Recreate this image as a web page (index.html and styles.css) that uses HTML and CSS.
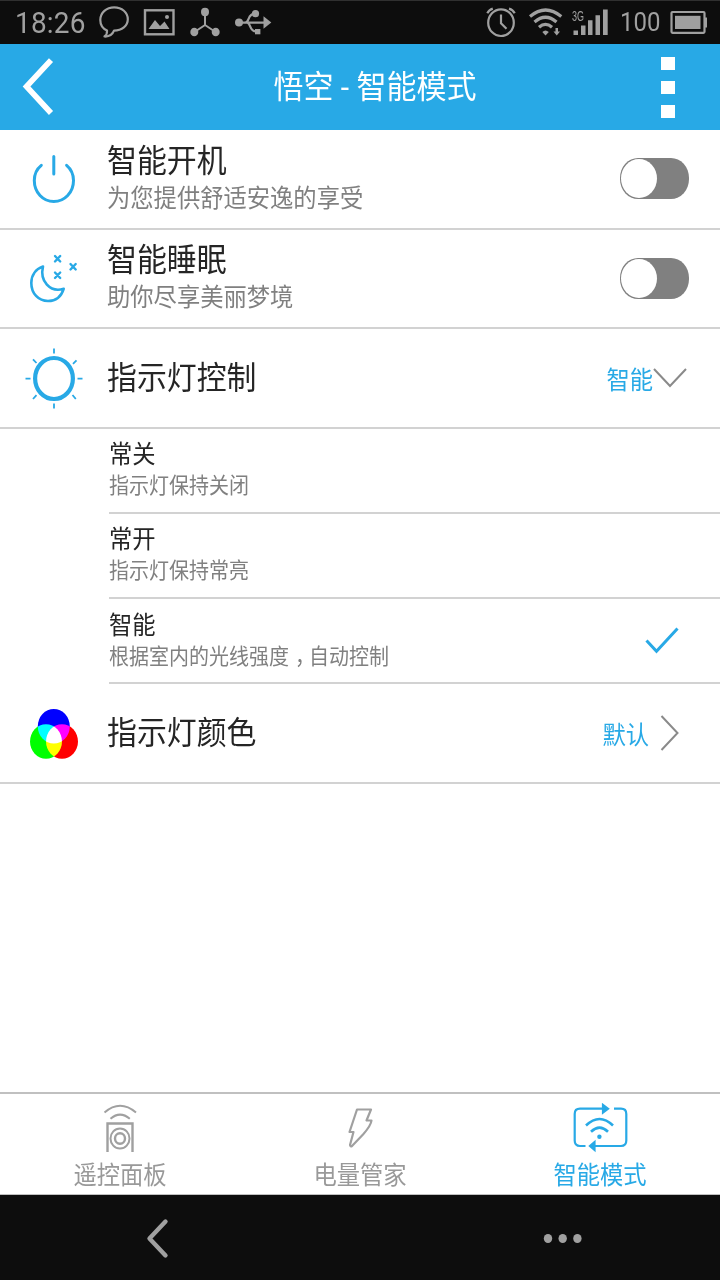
FILE: index.html
```
<!DOCTYPE html>
<html lang="zh-CN">
<head>
    <meta charset="UTF-8">
    <meta name="viewport" content="width=device-width, initial-scale=1.0">
    <title>悟空 - 智能模式</title>
    <link rel="stylesheet" href="styles.css">
</head>
<body>
    <div class="status-bar">
        <span class="status-time tall">18:26</span>
        <svg class="icon-bubble" width="32" height="44" viewBox="0 0 32 44" fill="none" stroke="#a0a0a0" stroke-width="2.2" stroke-linejoin="round">
            <path d="M9 30.500C4.500 28.500 2.300 24.500 2.300 20C2.300 12.500 8.500 7.300 16.200 7.300S29.800 12.500 29.800 19.200S24 30.700 16 30.700C14.500 34.500 11 36.800 6.500 36.500C8.500 35 9.300 33 9 30.500Z"/>
        </svg>
        <svg class="icon-picture" width="32" height="44" viewBox="0 0 32 44">
            <rect x="2" y="10.300" width="28.500" height="24" fill="none" stroke="#a0a0a0" stroke-width="2.400"/>
            <path d="M5.500 29L12 20L17 26L21.500 21.500L26.500 29Z" fill="#a0a0a0"/>
            <circle cx="24" cy="17" r="2" fill="#a0a0a0"/>
        </svg>
        <svg class="icon-node" width="32" height="44" viewBox="0 0 32 44" fill="#a0a0a0">
            <path d="M16 12V25L5.500 32M16 25L26.500 32" fill="none" stroke="#a0a0a0" stroke-width="2"/>
            <ellipse cx="16" cy="12" rx="4" ry="4.200"/>
            <ellipse cx="5.300" cy="32" rx="4" ry="4.300"/>
            <ellipse cx="26.700" cy="32" rx="4" ry="4.300"/>
        </svg>
        <svg class="icon-usb" width="40" height="44" viewBox="0 0 40 44" fill="#a0a0a0">
            <path d="M5 22.600H30M11 22.600C16 22.600 13 13.700 21 13.700M13 22.600C17 22.600 15 31.500 22 31.500H24" fill="none" stroke="#a0a0a0" stroke-width="2.200"/>
            <circle cx="5" cy="22.600" r="4"/>
            <circle cx="21.500" cy="13.700" r="3.600"/>
            <rect x="21" y="29" width="5.400" height="5.300"/>
            <path d="M29.500 16.300L37.300 22.600L29.500 28.800Z"/>
        </svg>
        <span class="spacer"></span>
        <svg class="icon-alarm" width="32" height="44" viewBox="0 0 32 44" fill="none" stroke="#a0a0a0" stroke-width="2.200">
            <ellipse cx="16" cy="22.700" rx="12.800" ry="13.300"/>
            <path d="M16 14.500V23.300L21.500 28.800M2.300 13.300Q4 9.800 7.800 8.600M24 8.600Q28 9.800 29.700 13.300"/>
        </svg>
        <svg class="icon-wifi" width="36" height="44" viewBox="0 0 36 44">
            <path d="M2 16.500Q17.500 3.500 33.300 16.500M6.500 22Q17.500 12.500 28.500 22M11 27.300Q17.500 21.500 24 27.300" fill="none" stroke="#a0a0a0" stroke-width="3.200"/>
            <path d="M14.300 32Q17.500 29 20.800 32L17.500 35.500Z" fill="#a0a0a0"/>
            <path d="M27.500 28H30V31.500H32L28.750 35.500L25.500 31.500H27.500Z" fill="#a0a0a0"/>
        </svg>
        <svg class="icon-signal" width="38" height="44" viewBox="0 0 38 44" fill="#a0a0a0">
            <text class="net-type" x="1" y="21" textLength="12" lengthAdjust="spacingAndGlyphs">3G</text>
            <path d="M2.500 30.500H7V35H2.500ZM10 25.500H14.500V35H10ZM17 20.300H21.500V35H17ZM24.500 15.300H29V35H24.500ZM32 9.500H36.700V35H32Z"/>
        </svg>
        <span class="status-battery tall">100</span>
        <svg class="icon-battery" width="38" height="44" viewBox="0 0 38 44" fill="#a0a0a0">
            <rect x="1.500" y="12" width="33" height="20.800" rx="1" fill="none" stroke="#a0a0a0" stroke-width="2.200"/>
            <rect x="5" y="15.800" width="25.500" height="13.200"/>
            <path d="M34.500 17.500H37V27.500H34.500Z"/>
        </svg>
    </div>

    <header class="title-bar">
        <svg width="60" height="86" viewBox="0 0 60 86" fill="none" stroke="#fff" stroke-width="5.600">
            <path d="M51 16.200L26.500 42.500L51 69"/>
        </svg>
        <h1 class="page-title"><span class="tall">悟空 - 智能模式</span></h1>
        <div class="menu-dots"><i></i><i></i><i></i></div>
    </header>

    <main class="settings">
        <section class="row">
            <svg class="row-icon" width="107" height="98" viewBox="0 0 107 98" fill="none" stroke="#28a9e6" stroke-width="3" stroke-linecap="round">
                <path d="M53.800 26.500V44M41.300 35.300C36.700 39 34.300 44.500 34.300 50.500C34.300 62.500 43 71.500 53.800 71.500S73.500 62.500 73.500 50.500C73.500 44.500 71 39 66.600 35.300"/>
            </svg>
            <div class="row-text">
                <h2 class="tall">智能开机</h2>
                <p class="tall">为您提供舒适安逸的享受</p>
            </div>
            <div class="switch"></div>
        </section>

        <section class="row">
            <svg class="row-icon" width="107" height="98" viewBox="0 0 107 98" fill="none" stroke="#28a9e6" stroke-width="2.600" stroke-linejoin="round" stroke-linecap="round">
                <path d="M43 37.500C35.500 40 31.300 46.500 31.300 54C31.300 64.500 38.500 72 48 72C55.500 72 61.300 67.500 63.700 59.800C50 64 39.500 52 43 37.500Z"/>
                <path d="M55 27L60.200 32.500M60.200 27L55 32.500M70.500 35L75.700 40.500M75.700 35L70.500 40.500M55 43.500L60.200 49M60.200 43.500L55 49" stroke-width="2.400"/>
            </svg>
            <div class="row-text">
                <h2 class="tall">智能睡眠</h2>
                <p class="tall">助你尽享美丽梦境</p>
            </div>
            <div class="switch"></div>
        </section>

        <section class="row">
            <svg class="row-icon" width="107" height="98" viewBox="0 0 107 98" fill="none" stroke="#28a9e6">
                <ellipse cx="54" cy="49.500" rx="18.900" ry="20.500" stroke-width="4.200"/>
                <path d="M54 19.500V24.500M54 74.500V79.500M25.500 49.700H30.500M77.500 49.700H82.500M33 30.300L36.500 34M76.500 31.300L73 34.800M33 70L36.500 66.200M75.800 70L72.500 66" stroke-width="1.800"/>
            </svg>
            <div class="row-text">
                <h2 class="tall">指示灯控制</h2>
            </div>
            <span class="row-value tall">智能</span>
            <svg class="arrow-down" width="34" height="20" viewBox="0 0 34 20" fill="none" stroke="#8a8a8a" stroke-width="2">
                <path d="M1 1L17 18L33 1"/>
            </svg>
        </section>

        <ul class="options">
            <li class="option">
                <div>
                    <h3 class="tall">常关</h3>
                    <p class="tall">指示灯保持关闭</p>
                </div>
            </li>
            <li class="option">
                <div>
                    <h3 class="tall">常开</h3>
                    <p class="tall">指示灯保持常亮</p>
                </div>
            </li>
            <li class="option">
                <div>
                    <h3 class="tall">智能</h3>
                    <p class="tall">根据室内的光线强度<span class="comma">，</span>自动控制</p>
                </div>
                <svg class="check" width="34" height="28" viewBox="0 0 34 28" fill="none" stroke="#28a9e6" stroke-width="3">
                    <path d="M1.500 13.500L11.500 24.300L32.500 1.500"/>
                </svg>
            </li>
        </ul>

        <section class="row">
            <svg class="row-icon" width="107" height="98" viewBox="0 0 107 98">
                <g class="rgb">
                    <ellipse cx="53.800" cy="42.300" rx="16" ry="17.300" fill="#00f"/>
                    <ellipse cx="46" cy="57.500" rx="16" ry="17.300" fill="#0f0"/>
                    <ellipse cx="62" cy="57.500" rx="16" ry="17.300" fill="#f00"/>
                </g>
            </svg>
            <div class="row-text">
                <h2 class="tall">指示灯颜色</h2>
            </div>
            <span class="row-value tall">默认</span>
            <svg class="arrow-right" width="20" height="36" viewBox="0 0 20 36" fill="none" stroke="#8a8a8a" stroke-width="2">
                <path d="M1.500 1L17.500 18L1.500 35"/>
            </svg>
        </section>
    </main>

    <nav class="tabs">
        <a class="tab">
            <svg width="60" height="60" viewBox="0 0 60 60" fill="none" stroke="#a0a0a0" stroke-width="2">
                <path d="M14.500 18.500Q30 5 46 18.500M20.500 24.700Q30 16.500 39.800 24.700"/>
                <path d="M17.500 58V29.500H42.500V58" stroke-width="2.400"/>
                <ellipse cx="30" cy="44.500" rx="9.500" ry="10"/>
                <ellipse cx="30" cy="44.500" rx="5" ry="5.300" stroke-width="2.400"/>
            </svg>
            <span class="tall">遥控面板</span>
        </a>
        <a class="tab">
            <svg width="60" height="60" viewBox="0 0 60 60" fill="none" stroke="#a0a0a0" stroke-width="2.200" stroke-linejoin="round">
                <path d="M27 15.500H41L36.500 26.500H41.500Q41 31.500 33 40.500L22 52Q20.500 53 20 51L23.500 38H19.500Z"/>
            </svg>
            <span class="tall">电量管家</span>
        </a>
        <a class="tab active">
            <svg width="60" height="60" viewBox="0 0 60 60" fill="none" stroke="#28a9e6" stroke-width="2.200">
                <path d="M35 14.700H10Q4.700 14.700 4.700 20V46.500Q4.700 52 10 52H15.500M44 14.700H51Q56.300 14.700 56.300 20V46.500Q56.300 52 51 52H22"/>
                <path d="M33 11V18.600L38 14.700ZM24.500 48.200V55.800L20 52Z" fill="#28a9e6"/>
                <path d="M16 31.500Q29.500 18.500 43 31.500M21 37.800Q29.500 29.500 38 37.800" stroke-width="2.600"/>
                <circle cx="29.400" cy="42.800" r="2.200" fill="#28a9e6" stroke="none"/>
            </svg>
            <span class="tall">智能模式</span>
        </a>
    </nav>

    <footer class="system-nav">
        <svg width="30" height="44" viewBox="0 0 30 44" fill="none" stroke="#a0a0a0" stroke-width="4.400" stroke-linecap="round" stroke-linejoin="round">
            <path d="M21.500 5.500L5.500 22.500L21.500 39.500"/>
        </svg>
        <svg width="40" height="44" viewBox="0 0 40 44" fill="#a0a0a0">
            <ellipse cx="5" cy="22.500" rx="4.200" ry="4.500"/>
            <ellipse cx="19.700" cy="22.500" rx="4.200" ry="4.500"/>
            <ellipse cx="34.400" cy="22.500" rx="4.200" ry="4.500"/>
        </svg>
    </footer>
</body>
</html>
```
FILE: styles.css
```
* { margin: 0; padding: 0; box-sizing: border-box; }
:root { --primary: #28a9e6; --dark: #252525; --muted: #808080; --icon: #a0a0a0; --line: #d2d2d2; --bar: #0d0d0d; }
body { width: 720px; height: 1280px; display: flex; flex-direction: column; overflow: hidden; background-color: #fff; color: var(--dark); font-family: Roboto, "Noto Sans CJK SC", sans-serif; }
svg { display: block; flex-shrink: 0; }
h1, h2, h3 { font-weight: 400; }
.tall { display: block; white-space: nowrap; transform: scaleY(1.06); }

.status-bar { height: 44px; display: flex; align-items: center; background-color: var(--bar); border-top: 1px solid #303030; color: var(--icon); padding: 0 12px 0 15px; }
.status-bar svg { margin-top: -1px; }
.status-time { width: 83px; font-size: 28px; line-height: 44px; letter-spacing: 0.2px; }
.icon-picture { margin-left: 13px; }
.icon-node { margin-left: 14px; }
.icon-usb { margin-left: 13px; }
.spacer { flex: 1; }
.icon-wifi { margin-left: 11px; }
.icon-signal { margin-left: 7px; }
.net-type { font-family: "Liberation Sans", sans-serif; font-size: 15px; }
.status-battery { width: 50px; margin-left: 11px; font-size: 24px; line-height: 44px; }

.title-bar { height: 86px; display: flex; align-items: center; justify-content: space-between; background-color: var(--primary); padding-right: 44px; }
.page-title { margin-left: 29px; color: #fff; font-size: 30px; line-height: 44px; }
.menu-dots { width: 15px; display: flex; flex-direction: column; gap: 11px; }
.menu-dots i { width: 14px; height: 13px; background-color: #fff; }

.settings { flex: 1; }
.row { height: 99.5px; display: flex; align-items: center; border-bottom: 2px solid var(--line); }
.row-text { flex: 1; }
.row-text h2 { font-size: 29.9px; line-height: 40px; }
.row-text p { font-size: 23.3px; line-height: 36px; color: var(--muted); }
.switch { width: 69px; height: 41px; margin-right: 31px; padding: 1px; border-radius: 18px / 20px; background-color: var(--muted); }
.switch::before { content: ""; display: block; width: 36px; height: 39px; border-radius: 50%; background-color: #fff; }
.row-value { font-size: 23.3px; color: var(--primary); }
.arrow-down { margin-right: 33px; }
.arrow-right { margin: 0 40px 0 11px; }

.options { list-style: none; margin-left: 109px; }
.option { height: 85.3px; display: flex; align-items: center; justify-content: space-between; border-bottom: 2px solid var(--line); }
.option h3 { font-size: 23.3px; line-height: 32px; }
.option p { font-size: 20px; line-height: 30px; color: var(--muted); }
.comma { margin: 0 -6px 0 6px; }
.check { margin-right: 41px; }
.rgb { isolation: isolate; }
.rgb ellipse { mix-blend-mode: screen; }

.tabs { height: 103px; display: flex; border-top: 2px solid #c0c0c0; border-bottom: 1px solid #c0c0c0; }
.tab { flex: 1; display: flex; flex-direction: column; align-items: center; font-size: 23.3px; line-height: 36px; color: #999; }
.tab svg { margin-bottom: 4px; }
.tab.active { color: var(--primary); }

.system-nav { height: 85px; display: flex; align-items: center; justify-content: space-between; background-color: var(--bar); padding: 0 137px 0 144px; }
```
